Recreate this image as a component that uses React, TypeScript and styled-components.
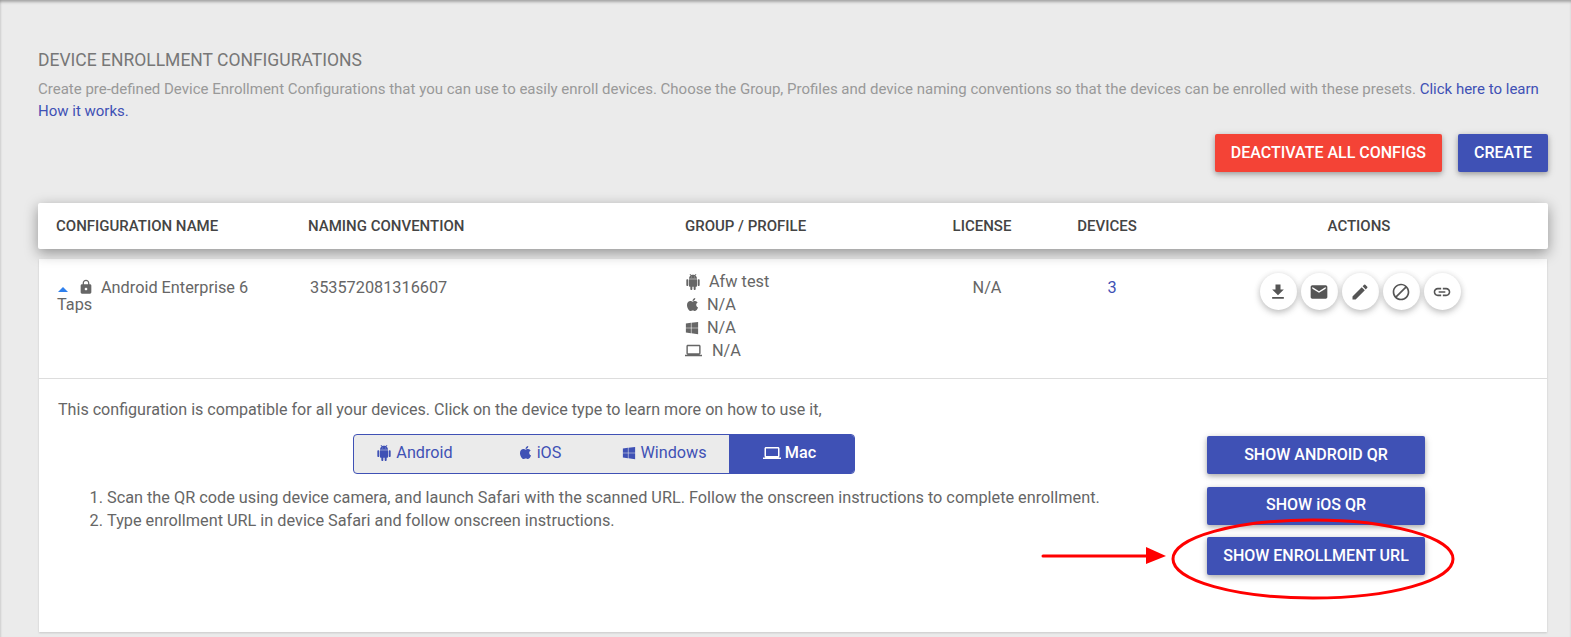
import React, { useState } from "react";
import styled, { createGlobalStyle } from "styled-components";
import { FaApple, FaWindows } from "react-icons/fa";
import {
  MdBlock,
  MdEdit,
  MdEmail,
  MdFileDownload,
  MdLaptop,
  MdLink,
  MdLock,
} from "react-icons/md";

const GlobalStyle = createGlobalStyle`
  html, body {
    margin: 0;
    padding: 0;
    background: #ebebeb;
  }
  * {
    box-sizing: border-box;
  }
`;

const Page = styled.div`
  position: relative;
  width: 1571px;
  height: 637px;
  overflow: hidden;
  padding: 50px 23px 0 38px;
  background: #ebebeb;
  font-family: Roboto, "Liberation Sans", sans-serif;
  font-size: 16.3px;
  color: #666;
  box-shadow: inset 0 3px 3px -1px rgba(0, 0, 0, 0.3), inset 2px 0 2px -1px rgba(0, 0, 0, 0.08);
`;

const Title = styled.h1`
  margin: 0;
  font-size: 17.5px;
  line-height: 20px;
  font-weight: 400;
  color: #777;
`;

const Description = styled.p`
  margin: 8px 0 0;
  font-size: 15px;
  line-height: 22px;
  color: #999;
  a {
    color: #3f51b5;
    text-decoration: none;
  }
`;

const Toolbar = styled.div`
  display: flex;
  justify-content: flex-end;
  gap: 16px;
  margin-top: 12px;
`;

const RaisedButton = styled.button<{ $tone?: "red" | "indigo" }>`
  height: 38px;
  padding: 0 16px 2px;
  border: 0;
  border-radius: 2px;
  background: ${(p) => (p.$tone === "red" ? "#f44336" : "#3f51b5")};
  color: #fff;
  font-family: inherit;
  font-size: 16px;
  font-weight: 500;
  box-shadow: 0 2px 5px rgba(0, 0, 0, 0.26), 0 2px 10px rgba(0, 0, 0, 0.12);
`;

const HeaderBar = styled.div`
  display: grid;
  grid-template-columns: 252px 377px 237px 120px 130px 374px;
  align-items: center;
  height: 46px;
  margin-top: 31px;
  padding-left: 18px;
  background: #fff;
  border-radius: 2px;
  box-shadow: 0 4px 14px rgba(0, 0, 0, 0.38);
  position: relative;
  font-size: 15px;
  font-weight: 500;
  color: #444;
`;

const HeadCell = styled.div<{ $center?: boolean }>`
  text-align: ${(p) => (p.$center ? "center" : "left")};
`;

const Card = styled.section`
  margin: 10px 1px 0;
  height: 373px;
  background: #fff;
  box-shadow: 0 1px 2px rgba(0, 0, 0, 0.15);
`;

const Row = styled.div`
  display: grid;
  grid-template-columns: 253px 375px 237px 120px 130px 374px;
  align-items: start;
  height: 120px;
  padding: 20px 0 0 18px;
  border-bottom: 1px solid #ddd;
  line-height: 17px;
`;

const Cell = styled.div<{ $center?: boolean }>`
  text-align: ${(p) => (p.$center ? "center" : "left")};
  padding-left: ${(p) => (p.$center ? "10px" : "0")};
`;

const NameCell = styled.div`
  width: 200px;
  svg {
    vertical-align: -2px;
  }
`;

const Caret = styled.span`
  display: inline-block;
  width: 0;
  height: 0;
  margin: 0 10px 1px 1px;
  border-left: 5px solid transparent;
  border-right: 5px solid transparent;
  border-bottom: 5px solid #2f80ed;
`;

const LockIcon = styled(MdLock)`
  margin-right: 7px;
`;

const ProfileList = styled.div`
  margin-top: -9px;
`;

const ProfileLine = styled.div<{ $gap: number }>`
  display: flex;
  align-items: center;
  gap: ${(p) => p.$gap}px;
  height: 23px;
`;

const DeviceLink = styled.span`
  color: #3f51b5;
`;

const Actions = styled.div`
  display: flex;
  justify-content: center;
  gap: 4px;
  margin: -6px 0 0 2px;
`;

const RoundButton = styled.button`
  display: flex;
  align-items: center;
  justify-content: center;
  width: 37px;
  height: 37px;
  padding: 0;
  border: 0;
  border-radius: 50%;
  background: #fff;
  color: #555;
  box-shadow: 0 2px 6px rgba(0, 0, 0, 0.22), 0 3px 10px rgba(0, 0, 0, 0.08);
`;

const Details = styled.div`
  display: grid;
  grid-template-columns: 1149px 218px;
  padding: 22px 0 0 19px;
`;

const Intro = styled.p`
  margin: 0;
  font-size: 16.1px;
  line-height: 17px;
`;

const Segments = styled.div`
  display: flex;
  width: 502px;
  height: 40px;
  margin: 16px 0 0 295px;
  border: 1px solid #3f51b5;
  border-radius: 4px;
  overflow: hidden;
  background: #ebebeb;
`;

const Segment = styled.div<{ $active?: boolean }>`
  flex: 1;
  display: flex;
  align-items: center;
  justify-content: center;
  gap: 4px;
  padding: 0 4px 3px 0;
  font-size: 16.2px;
  background: ${(p) => (p.$active ? "#3f51b5" : "transparent")};
  color: ${(p) => (p.$active ? "#fff" : "#3f51b5")};
  font-weight: ${(p) => (p.$active ? 500 : 400)};
`;

const Steps = styled.ol`
  margin: 12px 0 0;
  padding-left: 49px;
  font-size: 16.27px;
  line-height: 23px;
`;

const SideButtons = styled.div`
  display: flex;
  flex-direction: column;
  gap: 12.5px;
  padding-top: 35px;
`;

const SideButton = styled(RaisedButton)`
  width: 218px;
  padding: 0 0 2px;
`;

const Annotation = styled.svg`
  position: absolute;
  inset: 0;
  pointer-events: none;
`;

const AndroidIcon = ({ size }: { size: number }) => (
  <svg width={size} height={size} viewBox="0 0 24 24" fill="currentColor">
    <path d="M6 18c0 .55.45 1 1 1h1v3.5c0 .83.67 1.5 1.5 1.5s1.5-.67 1.5-1.5V19h2v3.5c0 .83.67 1.5 1.5 1.5s1.5-.67 1.5-1.5V19h1c.55 0 1-.45 1-1V8H6v10zM3.5 8C2.67 8 2 8.67 2 9.5v7c0 .83.67 1.5 1.5 1.5S5 17.33 5 16.5v-7C5 8.67 4.33 8 3.5 8zm17 0c-.83 0-1.5.67-1.5 1.5v7c0 .83.67 1.5 1.5 1.5s1.5-.67 1.5-1.5v-7c0-.83-.67-1.5-1.5-1.5zm-4.97-5.84l1.3-1.3c.2-.2.2-.51 0-.71-.2-.2-.51-.2-.71 0l-1.48 1.48C13.85 1.23 12.95 1 12 1c-.96 0-1.86.23-2.66.63L7.85.15c-.2-.2-.51-.2-.71 0-.2.2-.2.51 0 .71l1.31 1.31C6.97 3.26 6 5.01 6 7h12c0-1.99-.97-3.75-2.47-4.84zM10 5H9V4h1v1zm5 0h-1V4h1v1z" />
  </svg>
);

const segments = [
  { name: "Android", icon: <AndroidIcon size={16} /> },
  { name: "iOS", icon: <FaApple size={15} /> },
  { name: "Windows", icon: <FaWindows size={14} /> },
  { name: "Mac", icon: <MdLaptop size={18} /> },
];

export default function App() {
  const [platform, setPlatform] = useState("Mac");
  return (
    <Page>
      <GlobalStyle />
      <Title>DEVICE ENROLLMENT CONFIGURATIONS</Title>
      <Description>
        Create pre-defined Device Enrollment Configurations that you can use to easily enroll
        devices. Choose the Group, Profiles and device naming conventions so that the devices can
        be enrolled with these presets. <a href="#learn">Click here to learn How it works.</a>
      </Description>
      <Toolbar>
        <RaisedButton $tone="red">DEACTIVATE ALL CONFIGS</RaisedButton>
        <RaisedButton>CREATE</RaisedButton>
      </Toolbar>
      <HeaderBar>
        <HeadCell>CONFIGURATION NAME</HeadCell>
        <HeadCell>NAMING CONVENTION</HeadCell>
        <HeadCell>GROUP / PROFILE</HeadCell>
        <HeadCell $center>LICENSE</HeadCell>
        <HeadCell $center>DEVICES</HeadCell>
        <HeadCell $center>ACTIONS</HeadCell>
      </HeaderBar>
      <Card>
        <Row>
          <NameCell>
            <Caret />
            <LockIcon size={16} />
            Android Enterprise 6 Taps
          </NameCell>
          <Cell>353572081316607</Cell>
          <ProfileList>
            <ProfileLine $gap={8}>
              <AndroidIcon size={16} /> Afw test
            </ProfileLine>
            <ProfileLine $gap={7}>
              <FaApple size={15} /> N/A
            </ProfileLine>
            <ProfileLine $gap={8}>
              <FaWindows size={14} /> N/A
            </ProfileLine>
            <ProfileLine $gap={10}>
              <MdLaptop size={17} /> N/A
            </ProfileLine>
          </ProfileList>
          <Cell $center>N/A</Cell>
          <Cell $center>
            <DeviceLink>3</DeviceLink>
          </Cell>
          <Actions>
            <RoundButton>
              <MdFileDownload size={20} />
            </RoundButton>
            <RoundButton>
              <MdEmail size={20} />
            </RoundButton>
            <RoundButton>
              <MdEdit size={20} />
            </RoundButton>
            <RoundButton>
              <MdBlock size={20} />
            </RoundButton>
            <RoundButton>
              <MdLink size={20} />
            </RoundButton>
          </Actions>
        </Row>
        <Details>
          <div>
            <Intro>
              This configuration is compatible for all your devices. Click on the device type to
              learn more on how to use it,
            </Intro>
            <Segments>
              {segments.map((s) => (
                <Segment
                  key={s.name}
                  $active={s.name === platform}
                  onClick={() => setPlatform(s.name)}
                >
                  {s.icon}
                  {s.name}
                </Segment>
              ))}
            </Segments>
            <Steps>
              <li>
                Scan the QR code using device camera, and launch Safari with the scanned URL.
                Follow the onscreen instructions to complete enrollment.
              </li>
              <li>Type enrollment URL in device Safari and follow onscreen instructions.</li>
            </Steps>
          </div>
          <SideButtons>
            <SideButton>SHOW ANDROID QR</SideButton>
            <SideButton>SHOW iOS QR</SideButton>
            <SideButton>SHOW ENROLLMENT URL</SideButton>
          </SideButtons>
        </Details>
      </Card>
      <Annotation width="1571" height="637" viewBox="0 0 1571 637">
        <ellipse cx="1313" cy="559" rx="140" ry="39" fill="none" stroke="#f00" strokeWidth="3" />
        <line x1="1043" y1="556" x2="1150" y2="556" stroke="#f00" strokeWidth="3" strokeLinecap="round" />
        <polygon points="1146,547 1166,556 1146,564" fill="#f00" />
      </Annotation>
    </Page>
  );
}
